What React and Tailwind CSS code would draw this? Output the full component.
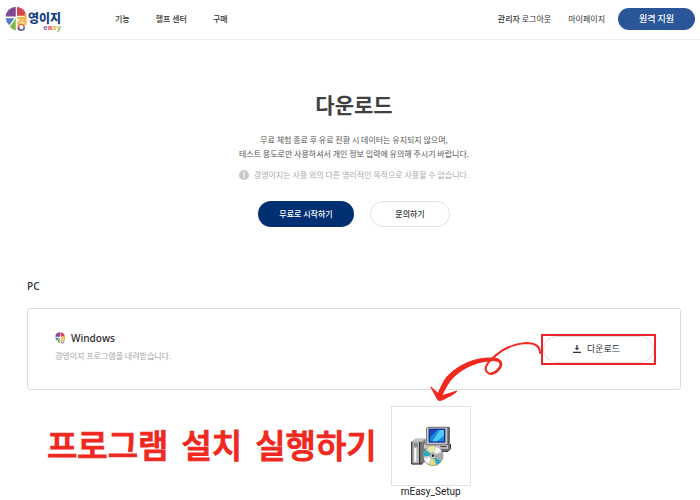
import React from "react";

const menu = ["기능", "헬프 센터", "구매"];

function PieMark({ className }) {
  return (
    <svg viewBox="0 0 80 80" className={className} aria-hidden="true">
      <path d="M33 32 L2 32 A33 31 0 0 1 33 2 Z" fill="#7d4a93" />
      <path d="M37 30 L37 2 A31 31 0 0 1 65 30 Z" fill="#d8434f" />
      <path d="M33 38 L33 76 A36 36 0 0 1 15 64 Z" fill="#7cba50" />
      <path d="M29 38 L13 59 A31 31 0 0 1 2 38 Z" fill="#4d7fc4" />
      <path d="M37 33 H66 V58 H37 Z" fill="#fbe3ab" />
      <path d="M38 36 H51 Q50 48 38 54 M53 38 H62 M53 47 H62" stroke="#f2b03a" strokeWidth="5" fill="none" />
      <path d="M63 25 V57" stroke="#f2b03a" strokeWidth="6" />
      <circle cx="50" cy="65" r="9" fill="#fff" stroke="#e66b42" strokeWidth="5" />
      <path d="M50 74 A9 9 0 0 1 41 65" fill="none" stroke="#7d4a93" strokeWidth="5" />
      <path d="M59 65 A9 9 0 0 1 50 74" fill="none" stroke="#4d7fc4" strokeWidth="5" />
    </svg>
  );
}

function Logo() {
  return (
    <a href="#" aria-label="경영이지 easy" className="flex items-start">
      <PieMark className="h-[26px] w-[26px]" />
      <span className="-ml-[3px] flex flex-col items-end pt-[6px]">
        <span className="text-[12px] leading-[12px] font-black text-[#16407f]">영이지</span>
        <span className="font-['Liberation_Sans',sans-serif] text-[8px] leading-[8px] font-bold">
          <span className="text-[#8b55a0]">e</span>
          <span className="text-[#e0525c]">a</span>
          <span className="text-[#f0a63c]">s</span>
          <span className="text-[#86bd4c]">y</span>
        </span>
      </span>
    </a>
  );
}

function Header() {
  return (
    <header className="ml-2 flex h-10 items-center border-b border-[#eeeeee] pr-[5px] pb-[2px] text-[8px] text-[#333]">
      <div className="-ml-[3px] w-[110px]">
        <Logo />
      </div>
      <nav className="flex gap-[26px] font-medium">
        {menu.map((m) => (
          <a key={m} href="#">
            {m}
          </a>
        ))}
      </nav>
      <div className="ml-auto flex items-center">
        <a href="#" className="mr-[17px]">
          <span className="font-medium">관리자</span> 로그아웃
        </a>
        <a href="#" className="mr-[13px]">
          마이페이지
        </a>
        <button className="h-[22px] w-[77px] rounded-full bg-[#2a5699] text-[9px] font-medium text-white">
          원격 지원
        </button>
      </div>
    </header>
  );
}

function Intro() {
  return (
    <section className="flex flex-col items-center pt-[50px] text-center">
      <h1 className="pl-2 text-[21px] leading-[28px] font-bold text-[#404040]">다운로드</h1>
      <p className="mt-[15px] pl-2 text-[8px] leading-[14px] text-[#555]">
        무료 체험 종료 후 유료 전환 시 데이터는 유지되지 않으며,
        <br />
        테스트 용도로만 사용하셔서 개인 정보 입력에 유의해 주시기 바랍니다.
      </p>
      <p className="mt-[7px] flex items-center gap-[5px] pl-2 text-[8px] leading-[14px] text-[#aaa]">
        <span className="flex h-[10px] w-[10px] items-center justify-center rounded-full bg-[#c8c8c8] font-bold text-white">
          !
        </span>
        경영이지는 사용 외의 다른 영리적인 목적으로 사용할 수 없습니다.
      </p>
      <div className="mt-[19px] flex gap-4 pl-2 text-[8px] font-medium">
        <button className="h-[26px] w-24 rounded-full bg-[#002f72] text-white">무료로 시작하기</button>
        <button className="h-[26px] w-20 rounded-full border border-[#e2e2e2] text-[#333]">문의하기</button>
      </div>
    </section>
  );
}

function CurlyArrow() {
  return (
    <svg
      viewBox="430 334 112 72"
      className="pointer-events-none absolute top-0 right-full h-[72px] w-[112px] overflow-visible"
      fill="none"
      stroke="#f0281e"
      strokeLinecap="round"
      strokeLinejoin="round"
      aria-hidden="true"
    >
      <path
        d="M541 353 C541 346 535 343 527 343 C514 344 502 350 494 358 C487 364 485 369 488 372 C491 376 498 373 501 368 C504 363 502 359 492 359"
        strokeWidth="2"
      />
      <path
        d="M494 358 C502 358 504 363 501 368 C499 372 495 374 492 374 L492 373 C497 372 501 367 501 364 C501 361 496 360 490 361 C474 362 459 371 451 381 C447 387 444 392 442 398 L438 397 C440 391 443 384 447 378 C456 367 474 358 489 358 Z"
        fill="#f0281e"
        strokeWidth="1"
      />
      <path d="M432 387 L442 396 L458 391 Q456 394 443 400 Q440 401 439 400 Z" fill="#f0281e" strokeWidth="1" />
    </svg>
  );
}

function DownloadCard() {
  return (
    <div className="mt-[15px] flex h-[82px] items-center justify-between rounded-[3px] border border-[#dcdcdc] pr-6 pl-[27px]">
      <div className="pb-[6px]">
        <h3 className="flex items-center gap-1 font-['Open_Sans',sans-serif] text-[10px] leading-[16px] font-semibold text-[#333]">
          <PieMark className="h-3 w-3" />
          Windows
        </h3>
        <p className="mt-[3px] text-[8px] leading-[14px] text-[#a5a5a5]">경영이지 프로그램을 내려받습니다.</p>
      </div>
      <div className="relative">
        <div className="border-2 border-[#ee222b]">
          <button className="flex h-[27px] w-[111px] items-center justify-center gap-[6px] rounded-full border border-[#ddd] pr-1 text-[9px] text-[#333]">
            <svg viewBox="0 0 24 24" className="h-2 w-2" fill="currentColor" aria-hidden="true">
              <path d="M10 0h4v9h5l-7 7-7-7h5zM0 20h24v4H0z" />
            </svg>
            다운로드
          </button>
        </div>
        <CurlyArrow />
      </div>
    </div>
  );
}

function InstallerIcon() {
  return (
    <svg viewBox="0 0 120 120" className="h-10 w-10" aria-hidden="true">
      {/* tower */}
      <path d="M2 47 L14 38 H44 V106 L34 115 H2 Z" fill="#777" />
      <path d="M2 47 L14 38 H44 L34 47 Z" fill="#c4c4c4" />
      <path d="M4 48 H24 V113 H4 Z" fill="#b4b4b4" />
      <path d="M8 54 H21 M8 60 H21" stroke="#444" strokeWidth="2" />
      <path d="M13 66 V107" stroke="#fff" strokeWidth="6" />
      <path d="M2 47 V114 M26 48 V114 M2 114 H34" stroke="#292929" strokeWidth="3" />
      {/* monitor and base */}
      <path d="M38 54 H119 V67 L112 75 H40 Z" fill="#777" />
      <path d="M39 55 H111 V68 H39 Z" fill="#ccc" />
      <path d="M88 62 H107" stroke="#222" strokeWidth="3" />
      <path d="M119 54 V68 L111 76 H80" fill="none" stroke="#222" strokeWidth="3" />
      <path d="M45 7 L51 2 H115 V52 L109 58 H45 Z" fill="#666" />
      <path d="M47 5 H109 V55 H47 Z" fill="#c4c4c4" />
      <path d="M53 8 H103 V50 H53 Z" fill="#122f9d" />
      <path d="M57 12 H99 V46 H57 Z" fill="#1689df" />
      <path d="M57 12 H80 L57 34 Z" fill="#1450b7" />
      <path d="M86 12 H99 V29 L78 46 H64 Z" fill="#50c7f5" />
      <path d="M115 4 V52 L109 58" fill="none" stroke="#292929" strokeWidth="2" />
      {/* disc */}
      <circle cx="66" cy="89" r="30" fill="#c6c6c6" stroke="#656565" strokeWidth="2" />
      <path d="M66 89 L48 65 A30 30 0 0 1 73 60 Z" fill="#eee7a4" />
      <path d="M66 89 L76 61 A29 29 0 0 1 91 74 Z" fill="#f7f7f7" />
      <path d="M66 89 L94 80 A29 29 0 0 1 91 103 Z" fill="#a8a8a8" />
      <path d="M66 89 L90 105 A29 29 0 0 1 77 116 Z" fill="#28aeba" />
      <path d="M66 89 L73 117 A29 29 0 0 1 55 116 Z" fill="#e7d978" />
      <path d="M66 89 L37 91 A29 29 0 0 1 43 71 Z" fill="#28aeba" />
      <path d="M66 89 L52 114 A29 29 0 0 1 38 98 Z" fill="#f4f4f4" />
      <circle cx="66" cy="89" r="9" fill="#ddd" stroke="#777" strokeWidth="2" />
      <circle cx="66" cy="89" r="4" fill="#222" />
    </svg>
  );
}

function SetupFile() {
  return (
    <figure className="flex flex-col items-center">
      <div className="flex h-20 w-20 items-center justify-center border border-[#e2e2e2]">
        <InstallerIcon />
      </div>
      <figcaption className="font-['Roboto',sans-serif] text-[10px] leading-[12px] text-[#222]">
        mEasy_Setup
      </figcaption>
    </figure>
  );
}

export default function App() {
  return (
    <div className="bg-white font-['Noto_Sans_CJK_KR',sans-serif]">
      <Header />
      <main>
        <Intro />
        <section className="mt-[52px] mr-[19px] ml-[27px]">
          <h2 className="font-['Open_Sans',sans-serif] text-[10px] leading-[14px] font-semibold text-[#333]">PC</h2>
          <DownloadCard />
          <div className="mt-4 flex items-start gap-[14px] pl-5">
            <h2 className="flex gap-[13px] pt-[18px] text-[33px] leading-[40px] font-medium text-[#f0281e] [-webkit-text-stroke:1px_#f0281e]">
              <span>프로그램</span> <span>설치</span> <span>실행하기</span>
            </h2>
            <SetupFile />
          </div>
        </section>
      </main>
    </div>
  );
}
